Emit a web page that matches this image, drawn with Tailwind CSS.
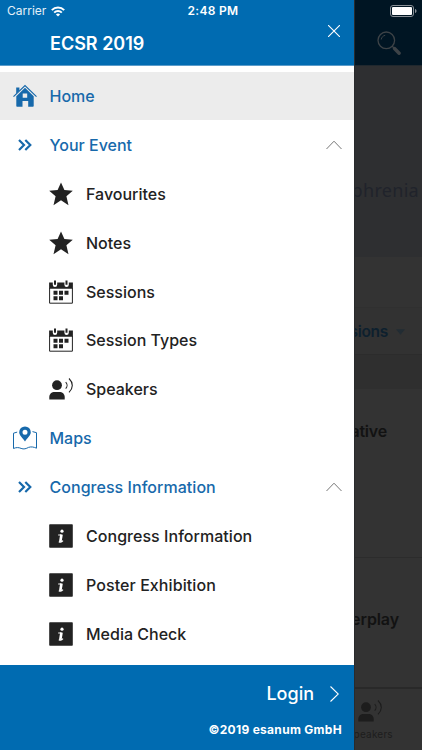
<!DOCTYPE html>
<html lang="en">
<head>
  <meta charset="UTF-8" />
  <meta name="viewport" content="width=device-width, initial-scale=1" />
  <title>ECSR 2019</title>
  <script src="https://cdn.jsdelivr.net/npm/@tailwindcss/browser@4"></script>
</head>
<body class="bg-[#333] font-['Inter',sans-serif] overflow-hidden">

  <!-- Shared icons -->
  <svg class="hidden">
    <symbol id="star" viewBox="0 0 24 24"><path fill="currentColor" d="M12 .4l3.4 7.6 8.4.8-6.4 5.5 2.1 8.9L12 18.3l-7.5 4.9 2.1-8.9L.2 8.8 8.6 8z" /></symbol>
    <symbol id="calendar" viewBox="0 0 24 24">
      <path fill="none" stroke="currentColor" d="M.6 8v15.2h22.8V8" />
      <path fill="currentColor" d="M.1 2.6h3.7v2.2a2.2 2.2 0 0 0 4.4 0V2.6h7.2v2.2a2.2 2.2 0 0 0 4.4 0V2.6h4.1v6.2H.1z" />
      <path fill="currentColor" d="M5 .4h2v4.4H5zM16.5.4h2v4.4h-2zM4.5 10.8h4v4h-4zm5.5 0h4v4h-4zm5.5 0h4v4h-4zm-11 5.5h4v4h-4zm5.5 0h4v4h-4z" />
    </symbol>
    <symbol id="speaker" viewBox="0 0 24 24">
      <circle cx="8" cy="8.2" r="4.9" fill="currentColor" />
      <path fill="currentColor" d="M.3 22.4v-2.2c0-3.4 2.2-5.3 5.5-5.3h4.4c3.3 0 5.5 1.9 5.5 5.3v2.2z" />
      <path fill="none" stroke="currentColor" stroke-width="1.1" d="M16.7 5.1c1.8 1.8 1.8 4.7 0 6.5M20 1.5c4.4 4.3 4.4 9.6 0 13.9" />
    </symbol>
    <symbol id="info" viewBox="0 0 24 24">
      <rect x=".2" y=".2" width="23.6" height="23.6" rx=".8" fill="currentColor" />
      <circle cx="13" cy="7.2" r="1.6" fill="#fff" />
      <path fill="none" stroke="#fff" stroke-width="1.2" d="M9.2 11h3.2M9.8 17.6c1.5.8 3 .5 4.2-.9" />
      <path fill="none" stroke="#fff" stroke-width="2.6" d="M12.5 10.5l-1.2 7.3" />
    </symbol>
    <symbol id="chevrons" viewBox="0 0 14 12"><path fill="none" stroke="currentColor" stroke-width="2.2" d="M1 1l5 5-5 5M7.3 1l5 5-5 5" /></symbol>
    <symbol id="up" viewBox="0 0 16 10"><path fill="none" stroke="currentColor" stroke-width="1" d="M.5 9L8 1.2 15.5 9" /></symbol>
  </svg>

  <div class="relative flex w-[422px] h-[750px] overflow-hidden">

    <!-- Drawer -->
    <aside class="w-[354px] h-full flex flex-col bg-white text-[#222]">
      <header class="h-[66px] shrink-0 bg-[#006bb1] border-b border-[#5b9cca] text-white flex justify-between pl-[50px] pr-[14px]">
        <h1 class="pt-[31px] text-[18px] leading-[26px] font-semibold">ECSR 2019</h1>
        <svg class="mt-[25px] w-3 h-3" viewBox="0 0 12 12" fill="none" stroke="#fff" stroke-width="1.1"><path d="M0 0l12 12M12 0L0 12" /></svg>
      </header>

      <nav class="pt-[5.6px] flex-1 text-[16px] font-medium">
        <a class="flex items-center h-[48.9px] bg-[#ececec] text-[#1769ab]">
          <span class="w-[49.5px] pl-[13px]">
            <svg class="w-6 h-6" viewBox="0 0 24 24">
              <path fill="none" stroke="currentColor" stroke-width="1.2" d="M.5 12.6L12 1.5l11.5 11.1" />
              <path fill="currentColor" d="M3.2 3.6h3.2v3L3.2 9.7z" />
              <path fill="currentColor" fill-rule="evenodd" d="M12 3.8l8.7 8.4v9.7a.8.8 0 0 1-.8.8h-4.7v-5.6H9.5v5.6H4.1a.8.8 0 0 1-.8-.8v-9.7zM9.7 9.6v4.2h4.5V9.6z" />
            </svg>
          </span>
          <span>Home</span>
        </a>
        <a class="flex items-center h-[48.9px] text-[#1769ab]">
          <span class="w-[49.5px] pl-[18px]"><svg class="w-[14px] h-3"><use href="#chevrons" /></svg></span>
          <span class="flex-1">Your Event</span>
          <svg class="w-4 h-[10px] mr-3 text-[#777]"><use href="#up" /></svg>
        </a>
        <a class="flex items-center h-[48.9px] pl-[49px] gap-[13px]"><svg class="w-6 h-6"><use href="#star" /></svg><span>Favourites</span></a>
        <a class="flex items-center h-[48.9px] pl-[49px] gap-[13px]"><svg class="w-6 h-6"><use href="#star" /></svg><span>Notes</span></a>
        <a class="flex items-center h-[48.9px] pl-[49px] gap-[13px]"><svg class="w-6 h-6"><use href="#calendar" /></svg><span>Sessions</span></a>
        <a class="flex items-center h-[48.9px] pl-[49px] gap-[13px]"><svg class="w-6 h-6"><use href="#calendar" /></svg><span>Session Types</span></a>
        <a class="flex items-center h-[48.9px] pl-[49px] gap-[13px]"><svg class="w-6 h-6"><use href="#speaker" /></svg><span>Speakers</span></a>
        <a class="flex items-center h-[48.9px] text-[#1769ab]">
          <span class="w-[49.5px] pl-[13px]">
            <svg class="w-6 h-6" viewBox="0 0 24 24">
              <path fill="none" stroke="currentColor" stroke-width="1" d="M4.2 6.1L.5 7.2v15.3c2.6-1.2 5.2-1.2 7.6-.1 2.6 1.2 5.2.2 7.4-1 2.6-.9 5.2-.5 8 .8V6.7l-4-1.1" />
              <path fill="currentColor" fill-rule="evenodd" d="M12 .4a5.8 5.8 0 0 1 5.8 5.8c0 3-3.6 6-5.8 9.2-2.2-3.2-5.8-6.2-5.8-9.2A5.8 5.8 0 0 1 12 .4zm0 3.3a2.5 2.5 0 1 0 0 5 2.5 2.5 0 0 0 0-5z" />
            </svg>
          </span>
          <span>Maps</span>
        </a>
        <a class="flex items-center h-[48.9px] text-[#1769ab]">
          <span class="w-[49.5px] pl-[18px]"><svg class="w-[14px] h-3"><use href="#chevrons" /></svg></span>
          <span class="flex-1 tracking-[.04px]">Congress Information</span>
          <svg class="w-4 h-[10px] mr-3 text-[#777]"><use href="#up" /></svg>
        </a>
        <a class="flex items-center h-[48.9px] pl-[49px] gap-[13px]"><svg class="w-6 h-6"><use href="#info" /></svg><span class="tracking-[.04px]">Congress Information</span></a>
        <a class="flex items-center h-[48.9px] pl-[49px] gap-[13px]"><svg class="w-6 h-6"><use href="#info" /></svg><span class="tracking-[.08px]">Poster Exhibition</span></a>
        <a class="flex items-center h-[48.9px] pl-[49px] gap-[13px]"><svg class="w-6 h-6"><use href="#info" /></svg><span>Media Check</span></a>
      </nav>

      <footer class="h-[85px] shrink-0 bg-[#006bb1] text-white pr-3 pt-4 flex flex-col items-end">
        <div class="flex items-center gap-4 pr-[3px] text-[18px] leading-[26px] font-medium">
          <span>Login</span>
          <svg class="w-[9px] h-4" viewBox="0 0 9 16" fill="none" stroke="#fff" stroke-width="1.1"><path d="M.5.5L8.3 8 .5 15.5" /></svg>
        </div>
        <p class="mt-[13px] text-[12px] leading-5 font-bold tracking-[.3px]">©2019 esanum GmbH</p>
      </footer>
    </aside>

    <!-- Dimmed page behind the drawer -->
    <main class="w-[68px] h-full flex flex-col overflow-hidden text-[#121212] border-l border-[#292b2d]">
      <div class="h-[66px] shrink-0 bg-[#001523] border-b border-[#20282e] pt-[31px] pl-[22px]">
        <svg class="w-6 h-6" viewBox="0 0 24 24" fill="none" stroke="#3d4347">
          <circle cx="9.3" cy="9.3" r="8.3" stroke-width="1.3" />
          <path stroke-width="1" d="M4.2 8.5c.4-2.3 1.8-3.7 4-4.2" />
          <path stroke-width="1.3" d="M15 15l2 2" />
          <path stroke-width="3.4" stroke-linecap="round" d="M17.5 17.5l4.6 4.8" />
        </svg>
      </div>
      <div class="h-[191px] shrink-0 bg-[#2e2f31] flex justify-end items-center pt-[58px] pr-[3px] text-[18px] tracking-[.3px] text-[#20232b] font-['Noto_Sans',sans-serif] whitespace-nowrap">phrenia</div>
      <div class="h-[51px] shrink-0 border-b border-[#303030]"></div>
      <div class="h-[47px] shrink-0 bg-[#323232] border-b border-[#2c2c2c] flex justify-end items-center gap-2 pt-px pr-[17px] text-[15.5px] font-semibold tracking-[-.3px] text-[#0d202e]">
        <span>sions</span>
        <svg class="w-[9px] h-[6px] shrink-0" viewBox="0 0 10 6"><path fill="#222c33" d="M0 0h10L5 6z" /></svg>
      </div>
      <div class="h-[34px] shrink-0 bg-[#2f2f2f]"></div>
      <div class="h-[169px] shrink-0 border-b border-[#2c2c2c] flex justify-end pr-[35px] pt-[30px] text-[16px] leading-6 font-semibold tracking-[-.2px]">ative</div>
      <div class="h-[129px] shrink-0 flex justify-end pr-[23px] pt-[49px] text-[16px] leading-6 font-semibold tracking-[-.1px]">erplay</div>
      <div class="flex-1 border-t-2 border-[#292929] text-[#1d1d1d] flex flex-col items-start">
        <svg class="w-6 h-6 mt-[10px] ml-[3px]"><use href="#speaker" /></svg>
        <span class="mt-[5px] ml-[-8px] text-[10px] leading-3 tracking-[.2px]">Speakers</span>
      </div>
    </main>

    <!-- Status bar over both panes -->
    <div class="absolute inset-x-0 top-0 h-[22px] text-white text-[12px] leading-[22px]">
      <div class="grid grid-cols-3 items-center pl-[7px] pr-[5px]">
        <div class="flex items-center gap-[5px]">
          <span class="text-[12px] text-[#e4f0f8]">Carrier</span>
          <svg class="w-[14px] h-[11px]" viewBox="0 0 14 11" fill="none" stroke="#fff" stroke-width="2">
            <path d="M.8 4.1a8.8 8.8 0 0 1 12.4 0M3.2 6.6a5.4 5.4 0 0 1 7.6 0" />
            <path fill="#fff" stroke="none" d="M7 10.6L4.9 8.5a3 3 0 0 1 4.2 0z" />
          </svg>
        </div>
        <span class="pl-[2px] text-center font-semibold tracking-[.3px] whitespace-nowrap">2:48 PM</span>
        <svg class="justify-self-end w-[27px] h-3" viewBox="0 0 27 12">
          <rect x=".5" y=".5" width="23" height="11" rx="2.5" fill="none" stroke="#899097" />
          <rect x="2" y="2" width="20" height="8" rx="1" fill="#fff" />
          <path fill="#899097" d="M25 4c2 .5 2 3.5 0 4z" />
        </svg>
      </div>
    </div>
  </div>
</body>
</html>
